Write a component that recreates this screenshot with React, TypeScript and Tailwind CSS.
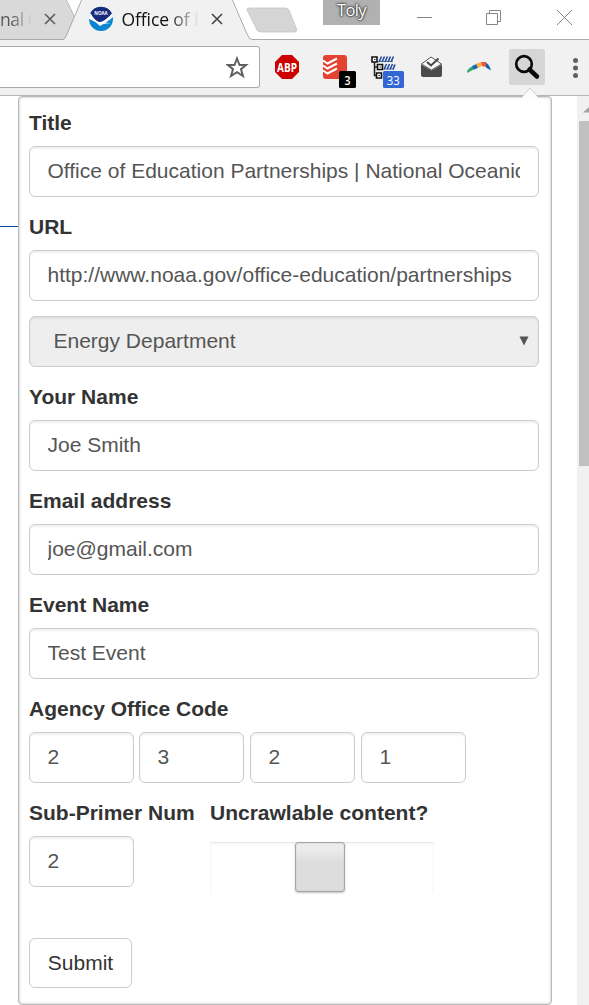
import React from "react";

const field =
  "h-[51px] rounded-[6px] border border-[#ccc] text-[#555] shadow-[inset_0_2px_2px_rgba(0,0,0,0.06)] flex items-center pl-[17.500px] pr-[18px] pb-[2px] text-[21px]";

function Label({ children }: { children: React.ReactNode }) {
  return (
    <div className="mb-2 h-[30px] text-[21px] leading-[30px] font-bold whitespace-nowrap text-[#333]">
      {children}
    </div>
  );
}

function TextGroup({ label, value }: { label: string; value: string }) {
  return (
    <div className="mb-[15px]">
      <Label>{label}</Label>
      <div className={field}>
        <span className="w-full overflow-hidden whitespace-nowrap">{value}</span>
      </div>
    </div>
  );
}

function TabStrip() {
  return (
    <div className="relative h-10 shrink-0 overflow-hidden bg-white">
      <svg className="absolute inset-0" width="589" height="40" viewBox="0 0 589 40">
        <path d="M0 0H66L75 18L65 39H0Z" fill="#d9d9d9" />
        <path d="M66 -1L74.500 17" stroke="#b8b8b8" fill="none" />
        <path d="M0 39.500H65L82 0H232L247 34Q249 39.500 252 39.500H589V41H0Z" fill="#f1f1f1" />
        <path d="M0 39.500H64Q65.500 38 67 34L82 -1M232 -1L247 34Q249 39.500 252 39.500H589" stroke="#aaa" fill="none" />
        <path d="M249 8H285Q288 8 289 10L297 30Q297 32 294 32H262Q258 32 257 30L247 10Q247 8 249 8Z" fill="#d5d5d5" stroke="#c4c4c4" strokeWidth="0.800" />
      </svg>
      <div className="relative flex h-full items-start font-['Open_Sans',sans-serif] text-[17.500px]">
        <span className="mt-[6px] w-[32px] overflow-hidden bg-gradient-to-r from-[#555] from-35% to-transparent bg-clip-text leading-[26px] tracking-[-0.4px] whitespace-nowrap text-transparent">
          nal O
        </span>
        <svg className="mt-[13px] ml-[12px] shrink-0" width="12" height="12" viewBox="0 0 12 12">
          <path d="M1 1L11 11M11 1L1 11" stroke="#5a5a5a" strokeWidth="1.600" />
        </svg>
        <svg className="mt-[6px] ml-[32px] shrink-0" width="26" height="26" viewBox="0 0 26 26">
          <circle cx="13" cy="13" r="12" fill="#0a86d1" />
          <path d="M2 8A12 12 0 0 1 24 8Q20 13 16 16Q13 18 10 16Q5 13 2 8Z" fill="#172b7c" />
          <path d="M1 11L2.500 7Q6 14 11 16Q15 17 24 7.500L25 11Q21 15 17.500 16.500Q20 16.500 22.500 17.500Q16 16.500 12 20Q8 15.500 1 13Z" fill="#fff" />
          <text x="13" y="9" textAnchor="middle" fontSize="4.500" fontWeight="700" fill="#fff" fontFamily="Open Sans">NOAA</text>
        </svg>
        <span className="mt-[6px] ml-[7.500px] w-[77.500px] overflow-hidden bg-gradient-to-r from-[#111] from-60% to-transparent bg-clip-text leading-[26px] tracking-[-0.100px] whitespace-nowrap text-transparent">
          Office of E
        </span>
        <svg className="mt-[13px] ml-[12px] shrink-0" width="12" height="12" viewBox="0 0 12 12">
          <path d="M1 1L11 11M11 1L1 11" stroke="#444" strokeWidth="1.600" />
        </svg>
        <div className="ml-[100px] h-[25px] w-[57px] bg-[#b1b1b1] text-center text-[16.500px] leading-[20px] tracking-[-0.600px] text-white [text-shadow:0_0_2px_#333,0_0_2px_#333,0_0_3px_#444]">
          Toly
        </div>
        <svg className="ml-[36px] shrink-0" width="170" height="36" viewBox="416 0 170 36">
          <path d="M417 17.500H432M486.500 13.500H497.500V24.500H486.500ZM489.500 13V10.500H500.500V21.500H498M557 10L572 25M572 10L557 25" stroke="#858585" fill="none" />
        </svg>
      </div>
    </div>
  );
}

function Toolbar() {
  return (
    <div className="flex h-14 shrink-0 items-start border-b border-[#b5b5b5] bg-[#f1f1f1] pt-[6px]">
      <div className="flex h-[42px] w-[260px] shrink-0 items-center justify-end rounded-r-[3px] border border-l-0 border-[#a9a9a9] bg-white pr-[10px]">
        <svg width="23" height="23" viewBox="0 0 23 23">
          <path d="M11 2.500L13.500 9H20L15 13.200L17 20L11 16.200L5 20L7 13.200L2 9H8.500Z" fill="none" stroke="#606060" strokeWidth="2" />
        </svg>
      </div>
      <svg width="329" height="49" viewBox="260 46 329 49" fontFamily="Open Sans">
        <path d="M282 55H292L299 62V72L292 79H282L275 72V62Z" fill="#cc0000" />
        <text x="287" y="71.500" textAnchor="middle" fontSize="12" fontWeight="700" fill="#fff" textLength="20" lengthAdjust="spacingAndGlyphs">ABP</text>
        <rect x="323" y="55" width="24" height="24" rx="3" fill="#e44332" />
        <path d="M323 60.500L327.500 63.500L337 58.500M323 65.500L327.500 68.500L337 63.500M323 70.500L327.500 73.500L337 68.500" stroke="#fff" strokeWidth="2" fill="none" />
        <rect x="339" y="71" width="17" height="17" rx="1.500" fill="#000" />
        <text x="347.500" y="85" textAnchor="middle" fontSize="12.500" fontWeight="600" fill="#fff" textLength="6" lengthAdjust="spacingAndGlyphs">3</text>
        <path d="M374.500 61V75.500H377M374.500 67H378" stroke="#222" strokeWidth="1.500" fill="none" />
        <path d="M372 57H377V62H372ZM377.500 64.500H382.500V69.500H377.500ZM376.500 73H381.500V78H376.500Z" fill="#fff" stroke="#111" strokeWidth="1.600" />
        <path d="M374 59.500H375.500M379.500 67H381M378.500 75.500H380" stroke="#222" />
        <path d="M379 62L381.500 56.500M382 62L384.500 56.500M385 62L387.500 56.500M388 62L390.500 56.500M391 62L393.500 56.500M384 69.500L386.500 64M387 69.500L389.500 64M390 69.500L392.500 64M393 69.500L395 64.500" stroke="#234b99" strokeWidth="1.600" />
        <path d="M378 61.500H393M384 69H394" stroke="#234b99" strokeWidth="0.700" />
        <rect x="383" y="71" width="21" height="17" rx="1.500" fill="#3367d6" />
        <text x="393.300" y="85" textAnchor="middle" fontSize="12.500" fill="#fff" textLength="13" lengthAdjust="spacingAndGlyphs">33</text>
        <path d="M421.500 64L431 57L441.500 64L431.500 70Z" fill="#fafafa" stroke="#555" strokeWidth="1" />
        <path d="M421 64.500L431.500 70.500L442 64.500V75Q442 77 440 77H423Q421 77 421 75Z" fill="#4a4a4a" />
        <path d="M427 62L431 65.500L438.500 58.500" stroke="#444" strokeWidth="2" fill="none" />
        <path d="M467.500 73L467 71Q470 67 474 65L475 69Q471 70.500 467.500 73Z" fill="#32a867" />
        <path d="M472 66.500L477 63.500L478 68L474 69.500Z" fill="#1565c0" />
        <path d="M476 64L481 62L482 66L478 68Z" fill="#fbb733" />
        <path d="M481 62H486V67L482 66Z" fill="#ef5344" />
        <path d="M486 62.500Q489.500 65 491 70.500L486 67.500Z" fill="#1261ac" />
        <rect x="509" y="49" width="36" height="36" rx="2" fill="#d6d6d6" />
        <circle cx="524" cy="64" r="7.800" fill="none" stroke="#090909" strokeWidth="2.700" />
        <path d="M529.500 69.500L537 76.500" stroke="#090909" strokeWidth="4.500" strokeLinecap="round" />
        <g fill="#606060">
          <circle cx="575.500" cy="60.500" r="2.500" />
          <circle cx="575.500" cy="68" r="2.500" />
          <circle cx="575.500" cy="75.500" r="2.500" />
        </g>
      </svg>
    </div>
  );
}

function Popup() {
  return (
    <div className="relative h-[909px] w-[534px] shrink-0 rounded-[4px] border border-[#b8b8b8] bg-white pt-[11px] pr-3 pl-[10px] shadow-[inset_0_0_3px_rgba(0,0,0,0.28)]">
      <svg className="absolute -top-[10px] left-[501px]" width="20" height="12" viewBox="0 0 20 12">
        <path d="M1 11L10 1L19 11V12H1Z" fill="#fcfcfc" />
        <path d="M1 11L10 1L19 11" fill="none" stroke="#c4c4c4" strokeWidth="0.800" />
      </svg>
      <TextGroup label="Title" value="Office of Education Partnerships | National Oceanic" />
      <TextGroup label="URL" value="http://www.noaa.gov/office-education/partnerships" />
      <div className="mb-[15px] flex h-[51px] items-center justify-between rounded-[6px] border border-[#ccc] bg-[#eee] pr-[9px] pb-[2px] pl-[23.500px] text-[21px] text-[#555] shadow-[inset_0_2px_2px_rgba(0,0,0,0.06)]">
        <span>Energy Department</span>
        <svg width="10" height="10" viewBox="0 0 10 10">
          <path d="M0.500 0.500H9.500L5 9.500Z" fill="#555" />
        </svg>
      </div>
      <TextGroup label="Your Name" value="Joe Smith" />
      <TextGroup label="Email address" value="joe@gmail.com" />
      <TextGroup label="Event Name" value="Test Event" />
      <Label>Agency Office Code</Label>
      <div className="mb-[15px] flex">
        <div className={`${field} w-[105px]`}>2</div>
        <div className={`${field} ml-[5px] w-[105px]`}>3</div>
        <div className={`${field} ml-[6px] w-[105px]`}>2</div>
        <div className={`${field} ml-[6px] w-[105px]`}>1</div>
      </div>
      <div className="flex h-[117px]">
        <div className="w-[181px]">
          <Label>Sub-Primer Num</Label>
          <div className={`${field} w-[105px]`}>2</div>
        </div>
        <div>
          <Label>Uncrawlable content?</Label>
          <div className="mt-[14px] flex h-[51px] w-[224px] justify-center border-x border-t border-x-[#f7f7f7] border-t-[#eaeaea] pr-[4px] shadow-[inset_0_2px_2px_rgba(0,0,0,0.03)]">
            <div className="-mt-px h-[50px] w-[50px] rounded-[3px] border border-[#a6a6a6] bg-gradient-to-b from-[#ececec] from-15% to-[#dddddd] to-40% shadow-[inset_0_0_1px_#999,0_1px_2px_rgba(0,0,0,0.25)]" />
          </div>
        </div>
      </div>
      <button className="mt-[23px] block h-[50px] w-[103px] rounded-[6px] border border-[#ccc] bg-white text-[21px] text-[#333]">
        Submit
      </button>
    </div>
  );
}

export default function App() {
  return (
    <div className="flex h-[1005px] w-[589px] flex-col overflow-hidden bg-white font-['Liberation_Sans',Arial,sans-serif]">
      <TabStrip />
      <Toolbar />
      <div className="flex h-[909px] shrink-0 items-start">
        <div className="mt-[130px] h-px w-[18px] bg-[#104a96]" />
        <Popup />
        <div className="ml-[25px] h-full w-3 shrink-0 overflow-hidden bg-[#f1f1f1] pl-[2px]">
          <svg className="mt-[11px] block" width="10" height="6" viewBox="0 0 10 6">
            <path d="M4 5.500L10 0V5.500Z" fill="#a3a3a3" />
          </svg>
          <div className="mt-2 h-[345px] bg-[#c1c1c1]" />
        </div>
      </div>
    </div>
  );
}
